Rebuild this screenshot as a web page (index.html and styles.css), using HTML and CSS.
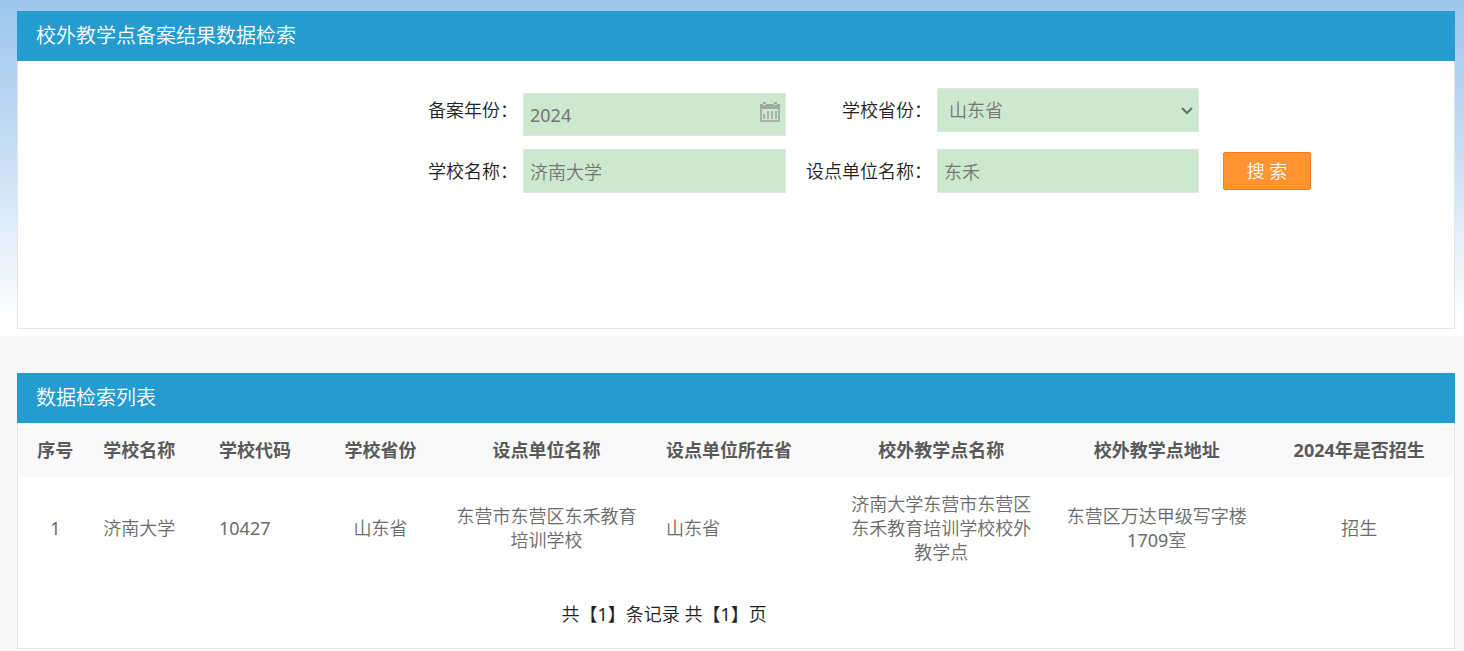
FILE: index.html
```html
<!DOCTYPE html>
<html lang="zh-CN">
<head>
<meta charset="utf-8">
<meta name="viewport" content="width=device-width, initial-scale=1">
<title>校外教学点备案结果数据检索</title>
<link rel="stylesheet" href="styles.css">
</head>
<body>
<section class="band band-search">
  <div class="panel">
    <h2 class="panel-title">校外教学点备案结果数据检索</h2>
    <form class="search-form">
      <label class="field-label" for="year">备案年份：</label>
      <div class="date-field">
        <input class="field field-date" id="year" type="text" value="2024">
        <svg class="date-icon" viewBox="0 0 22 21" aria-hidden="true">
          <path fill="#a3aaa4" d="M1 2h3v1h3V2h8v1h3V2h3v5H1z"/>
          <path fill="#a3aaa4" d="M4 0h3v2H4zM15 0h3v2h-3z"/>
          <path fill="none" stroke="#a9b3aa" stroke-width="2" d="M2 6v13h18V6"/>
          <path fill="none" stroke="#a9b3aa" stroke-width="2" d="M5 17v-5M9 17V9M13 17V9M17 17V9"/>
        </svg>
      </div>
      <label class="field-label" for="province">学校省份：</label>
      <div class="select-field">
        <select class="field field-select" id="province"><option>山东省</option></select>
        <svg class="select-arrow" viewBox="0 0 12 8" aria-hidden="true"><path fill="none" stroke="#6b6f6c" stroke-width="2" d="M1 1l5 5 5-5"/></svg>
      </div>
      <label class="field-label row-two" for="school">学校名称：</label>
      <input class="field" id="school" type="text" value="济南大学">
      <label class="field-label" for="unit">设点单位名称：</label>
      <input class="field" id="unit" type="text" value="东禾">
      <button class="search-button" type="submit">搜 索</button>
    </form>
  </div>
</section>
<section class="band band-results">
  <div class="panel">
    <h2 class="panel-title">数据检索列表</h2>
    <table class="results">
      <colgroup>
        <col class="col-index"><col class="col-school"><col class="col-code"><col class="col-province"><col class="col-wide"><col class="col-unit-province"><col class="col-wide"><col class="col-wide"><col class="col-enroll">
      </colgroup>
      <thead>
        <tr>
          <th>序号</th><th>学校名称</th><th class="cell-code">学校代码</th><th>学校省份</th><th>设点单位名称</th><th class="cell-start">设点单位所在省</th><th>校外教学点名称</th><th>校外教学点地址</th><th>2024年是否招生</th>
        </tr>
      </thead>
      <tbody>
        <tr>
          <td>1</td><td>济南大学</td><td class="cell-code">10427</td><td>山东省</td><td>东营市东营区东禾教育培训学校</td><td class="cell-start">山东省</td><td>济南大学东营市东营区东禾教育培训学校校外教学点</td><td>东营区万达甲级写字楼1709室</td><td>招生</td>
        </tr>
      </tbody>
    </table>
    <p class="pager">共【1】条记录 共【1】页</p>
  </div>
</section>
</body>
</html>
```
FILE: styles.css
```css
* {
  box-sizing: border-box;
}

body {
  margin: 0;
  background: #f8f8f8;
  color: #222;
  font-family: "Noto Sans", "Noto Sans CJK SC DemiLight", "Noto Sans CJK SC", sans-serif;
  font-size: 18px;
  line-height: 24px;
}

.band {
  padding-left: 17px;
  padding-right: 9px;
}

.band-search {
  padding-top: 11px;
  padding-bottom: 7px;
  background: linear-gradient(#9cc5ec, #c4dcf4 42%, #fff 96%);
}

.band-results {
  padding-top: 37px;
}

.panel {
  background: #fff;
  border: 1px solid #e5e5e5;
  border-top: 0;
}

.panel-title {
  margin: 0 -1px;
  padding: 0 19px;
  background: #269bcf;
  color: #fff;
  font-size: 20px;
  font-weight: 350;
  line-height: 50px;
}

.search-form {
  display: grid;
  grid-template-columns: auto 263px auto 262px auto;
  grid-auto-rows: min-content;
  justify-content: end;
  align-items: start;
  row-gap: 13px;
  min-height: 267px;
  padding: 27px 143px 0 0;
}

.field-label {
  padding-left: 20px;
  padding-right: 5px;
  line-height: 44px;
  text-align: right;
}

.row-two {
  grid-column: 1;
}

.field {
  width: 100%;
  height: 44px;
  padding: 0 6px;
  border: 1px solid #e2e5e2;
  border-radius: 0;
  background: #cce8cf;
  color: #757575;
  font: inherit;
}

.select-field {
  position: relative;
}

.field-select {
  display: block;
  padding: 0 24px 0 11px;
  appearance: none;
}

.select-arrow {
  position: absolute;
  top: 19px;
  right: 6px;
  width: 12px;
  height: 8px;
  pointer-events: none;
}

.date-field {
  position: relative;
  padding-top: 5px;
}

.field-date {
  display: block;
  height: 43px;
  padding-right: 32px;
}

.date-icon {
  position: absolute;
  top: 14px;
  right: 5px;
  width: 22px;
  height: 21px;
}

.search-button {
  align-self: center;
  width: 88px;
  height: 38px;
  margin-left: 24px;
  padding: 0;
  border: 1px solid #ff7a1a;
  border-radius: 2px;
  background: #ff9430;
  color: #fff;
  font: inherit;
}

.results {
  width: 100%;
  table-layout: fixed;
  border-collapse: collapse;
  color: #6b6b6b;
  text-align: center;
}

.results th {
  padding: 15px 0;
  background: #f9f9f9;
  color: #5a5a5a;
  font-family: "Noto Sans", "Noto Sans CJK SC", sans-serif;
  font-weight: 700;
}

.results td {
  padding: 15px 16px 17px;
}

.results td:nth-child(-n + 4) {
  padding-left: 0;
  padding-right: 0;
}

.results .cell-code {
  padding-left: 33px;
  text-align: left;
}

.results .cell-start {
  padding-left: 12px;
  text-align: left;
}

.results td.cell-code {
  padding-left: 33px;
}

.col-index { width: 5.2%; }
.col-school { width: 6.5%; }
.col-code { width: 9.5%; }
.col-province { width: 8.1%; }
.col-wide { width: 15%; }
.col-unit-province { width: 12.5%; }
.col-enroll { width: 13.2%; }

.pager {
  margin: 0;
  padding: 21px 10% 22px 0;
  text-align: center;
}
```
